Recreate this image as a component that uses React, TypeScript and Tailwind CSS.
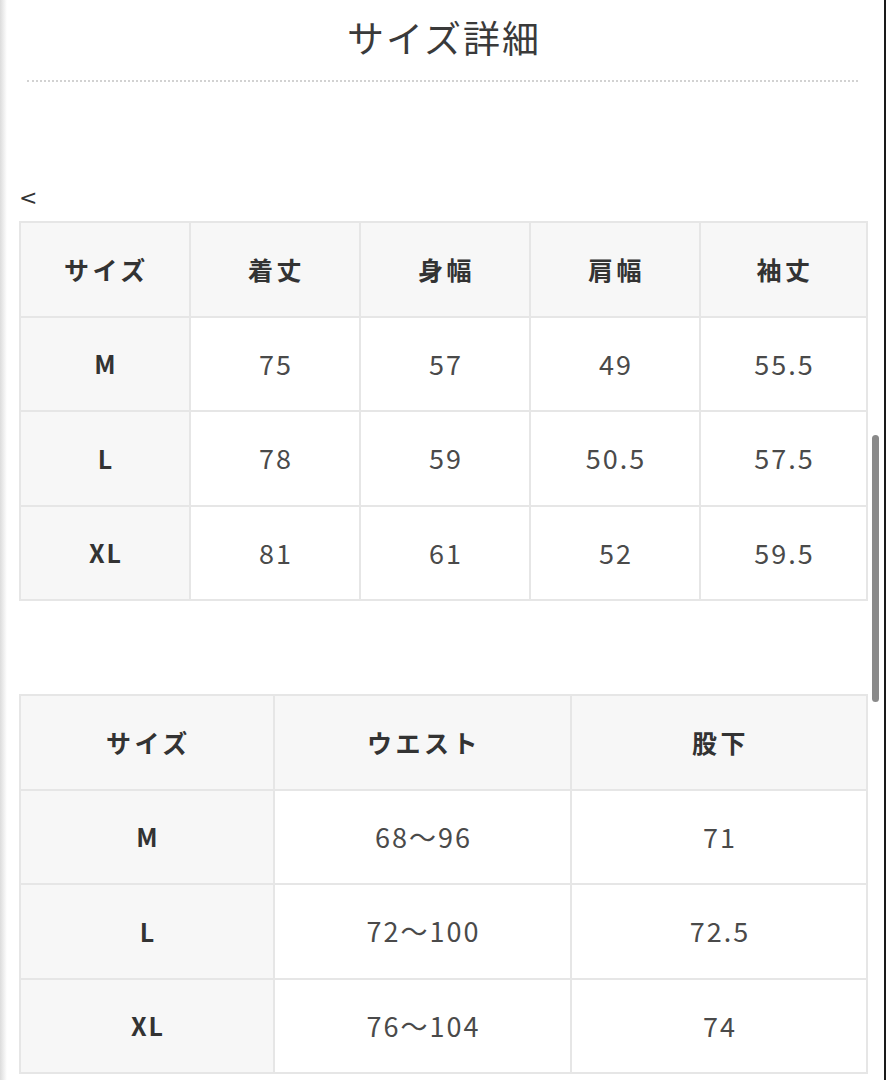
import React from 'react'

const topHead = ['サイズ', '着丈', '身幅', '肩幅', '袖丈']
const topRows = [
  ['M', '75', '57', '49', '55.5'],
  ['L', '78', '59', '50.5', '57.5'],
  ['XL', '81', '61', '52', '59.5'],
]

const bottomHead = ['サイズ', 'ウエスト', '股下']
const bottomRows = [
  ['M', '68〜96', '71'],
  ['L', '72〜100', '72.5'],
  ['XL', '76〜104', '74'],
]

const SizeTable = ({
  head,
  rows,
  widths,
}: {
  head: string[]
  rows: string[][]
  widths: string[]
}) => {
  return (
    <table className="w-[847px] table-fixed border-collapse">
      <colgroup>
        {widths.map((w, i) => (
          <col key={i} className={w} />
        ))}
      </colgroup>
      <thead>
        <tr className="h-[94.5px]">
          {head.map((h) => (
            <th
              key={h}
              className="border-2 border-[#e6e6e6] bg-[#f7f7f7] pl-[3px] text-[25px] font-bold tracking-[3.5px] text-[#333]"
            >
              {h}
            </th>
          ))}
        </tr>
      </thead>
      <tbody>
        {rows.map((row) => (
          <tr key={row[0]} className="h-[94.5px]">
            {row.map((cell, i) =>
              i === 0 ? (
                <th
                  key={i}
                  className="border-2 border-[#e6e6e6] bg-[#f7f7f7] pl-[2px] text-[25px] font-bold tracking-[2px] text-[#333]"
                >
                  {cell}
                </th>
              ) : (
                <td
                  key={i}
                  className="border-2 border-[#e6e6e6] bg-white pl-[2px] text-center text-[27px] tracking-[2px] text-[#4a4a4a]"
                >
                  {cell}
                </td>
              )
            )}
          </tr>
        ))}
      </tbody>
    </table>
  )
}

export default function App() {
  return (
    <div className="flex h-[1080px] w-[887px] overflow-hidden bg-white font-['Noto_Sans_CJK_JP','Noto_Sans',sans-serif]">
      {/* left edge shade */}
      <div className="w-[7px] shrink-0 bg-gradient-to-r from-[#dcdcdc] to-white" />

      <main className="w-[860px] shrink-0 pl-[12px]">
        <h1 className="pt-[19px] pl-[2px] text-center text-[37px] leading-none font-normal tracking-[2px] text-[#3a3a3a]">
          サイズ詳細
        </h1>
        <div className="mt-[24px] ml-[8px] mr-[9px] border-t-2 border-dotted border-[#d2d2d2]" />

        <div className="mt-[105px] font-['DejaVu_Sans',sans-serif] text-[22px] leading-[22px] text-[#333]">
          &lt;
        </div>

        <div className="mt-[12px]">
          <SizeTable
            head={topHead}
            rows={topRows}
            widths={['w-[170px]', 'w-[170px]', 'w-[170px]', 'w-[170px]', 'w-[167px]']}
          />
        </div>

        <div className="mt-[93px]">
          <SizeTable
            head={bottomHead}
            rows={bottomRows}
            widths={['w-[254px]', 'w-[297px]', 'w-[296px]']}
          />
        </div>
      </main>

      {/* scrollbar gutter */}
      <div className="w-[17px] shrink-0 pt-[435px] pl-[5px]">
        <div className="h-[267px] w-[7px] rounded-full bg-[#8a8a8a]" />
      </div>
      <div className="w-[2px] shrink-0 bg-[#1a1a1a]" />
      <div className="w-px shrink-0 bg-white" />
    </div>
  )
}
